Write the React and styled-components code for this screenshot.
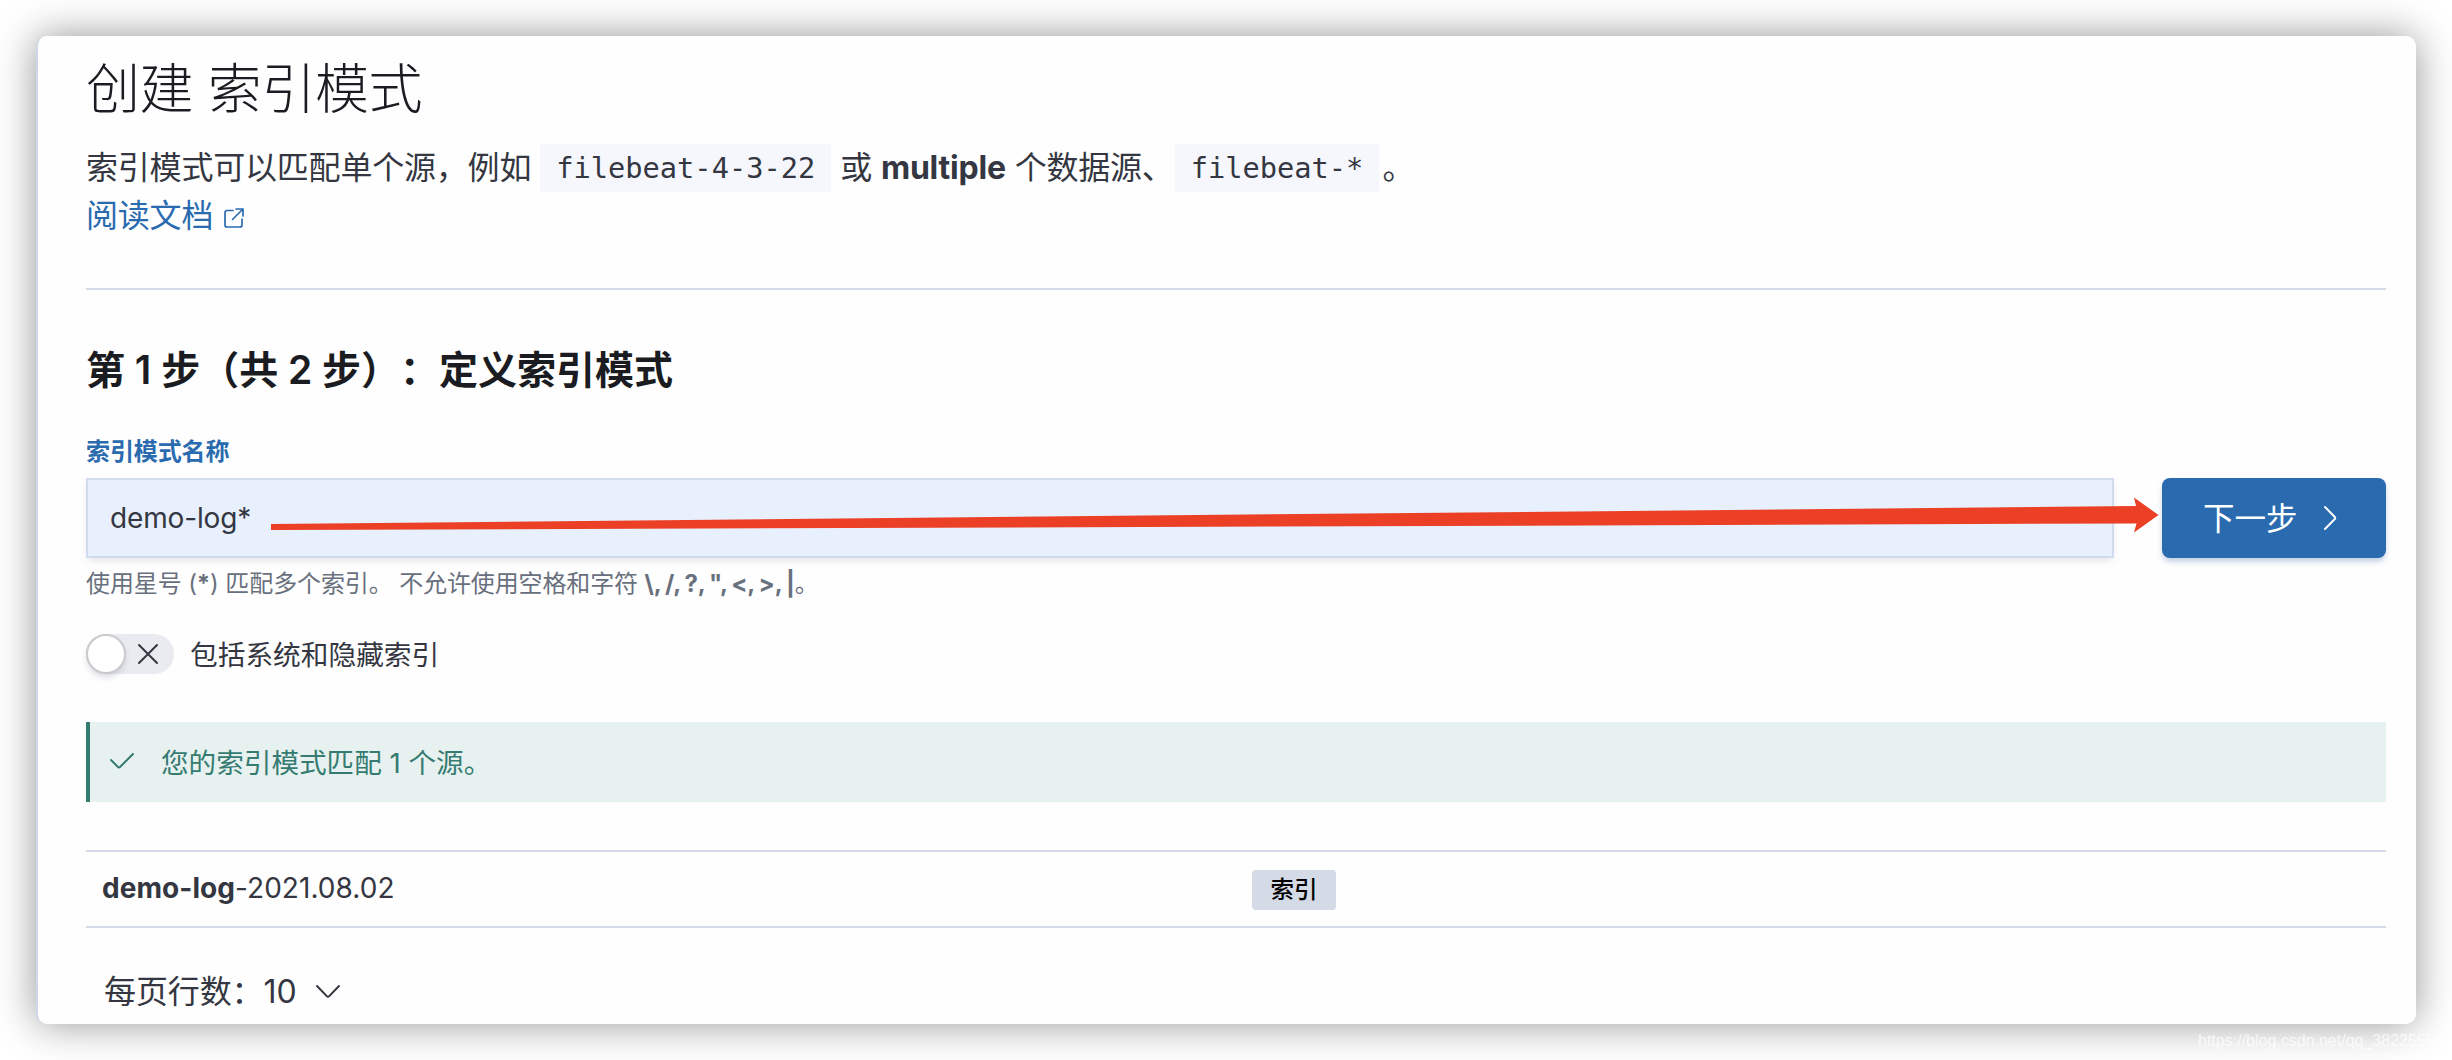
import React from "react";
import styled, { createGlobalStyle, css } from "styled-components";

const sans = `Inter, "Noto Sans CJK SC", sans-serif`;

const GlobalStyle = createGlobalStyle`
  * { box-sizing: border-box; }
  body { margin: 0; background: #fff; font-family: ${sans}; color: #343741; }
`;

const Stage = styled.div`
  position: relative;
  width: 2452px;
  height: 1060px;
  padding: 36px;
  overflow: hidden;
  background: #fff;
`;

const Card = styled.main`
  display: flex;
  flex-direction: column;
  height: 988px;
  padding: 18px 30px 0 48px;
  border-left: 2px solid #d0d8e8;
  border-radius: 10px;
  background: #fefefe;
  box-shadow: 0 0 40px rgba(0, 0, 0, 0.42);
`;

const Title = styled.h1`
  margin: 0;
  height: 72px;
  font-size: 54px;
  line-height: 72px;
  font-weight: 300;
  letter-spacing: -0.45px;
  color: #1a1c21;
  white-space: pre;
`;

const Intro = styled.div`
  display: flex;
  flex-direction: column;
  margin-top: 18px;
  font-size: 32px;
  line-height: 48px;
`;

const IntroLine = styled.div`
  display: flex;
  align-items: center;
  height: 48px;
  letter-spacing: -0.2px;
  white-space: pre;
`;

const Bold = styled.strong`
  font-weight: 700;
`;

const Chars = styled(Bold)`
  word-spacing: -1.5px;
`;

const Code = styled.code`
  padding: 0 16px;
  margin: ${(p) => p.$margin};
  font-family: "DejaVu Sans Mono", monospace;
  font-size: 28.7px;
  line-height: 48px;
  letter-spacing: 0;
  background: #f5f7fc;
`;

const DocLink = styled.a`
  display: flex;
  align-items: center;
  gap: 11px;
  color: #2a6bb0;
`;

const Rule = styled.hr`
  width: 100%;
  height: 2px;
  margin: 48px 0 0;
  border: 0;
  background: #d4dae8;
`;

const StepTitle = styled.h2`
  margin: 50px 0 0;
  height: 60px;
  font-size: 39px;
  line-height: 60px;
  font-weight: 600;
  color: #1a1c21;
  white-space: pre;
`;

const Punct = styled.span`
  display: inline-block;
  width: 39px;
`;

const FieldLabel = styled.label`
  margin-top: 36px;
  height: 32px;
  font-size: 24px;
  line-height: 32px;
  font-weight: 600;
  letter-spacing: -0.1px;
  color: #2a6bb0;
`;

const FormRow = styled.div`
  display: flex;
  justify-content: space-between;
  margin-top: 10px;
`;

const Field = styled.div`
  display: flex;
  align-items: center;
  width: 2028px;
  height: 80px;
  padding: 0 22px;
  border: 2px solid #d1dbf0;
  background: #e8f0fe;
  box-shadow: 0 4px 8px -2px rgba(110, 110, 120, 0.2);
  font-size: 28px;
  letter-spacing: -0.15px;
`;

const NextButton = styled.button`
  display: flex;
  align-items: center;
  width: 224px;
  height: 80px;
  padding: 0 0 5px 41px;
  gap: 26px;
  border: 0;
  border-radius: 8px;
  background: #2a6bb0;
  box-shadow: 0 4px 6px -1px rgba(54, 97, 170, 0.35);
  color: #fff;
  font-family: ${sans};
  font-size: 31.5px;
`;

const Help = styled.p`
  margin: 8px 0 0;
  height: 36px;
  font-size: 24px;
  line-height: 36px;
  letter-spacing: -0.12px;
  color: #69707d;
  white-space: pre;
`;

const SwitchRow = styled.div`
  display: flex;
  align-items: center;
  gap: 16px;
  height: 40px;
  margin-top: 32px;
  font-size: 27.7px;
`;

const SwitchLabel = styled.span`
  padding-bottom: 3px;
`;

const Track = styled.span`
  display: flex;
  align-items: center;
  gap: 12px;
  width: 88px;
  height: 40px;
  border-radius: 20px;
  background: #eaebf0;
`;

const Thumb = styled.span`
  width: 40px;
  height: 40px;
  border: 2px solid #c9cacd;
  border-radius: 50%;
  background: #fff;
  box-shadow: 0 4px 6px -1px rgba(80, 90, 120, 0.22);
`;

const Callout = styled.div`
  display: flex;
  align-items: center;
  gap: 27px;
  height: 80px;
  margin-top: 48px;
  padding: 0 0 3px 20px;
  border-left: 4px solid #357b72;
  background: #e7f1ef;
  color: #357b72;
  font-size: 27.6px;
  white-space: pre;
`;

const TableRow = styled.div`
  display: flex;
  align-items: center;
  height: 78px;
  margin-top: 48px;
  border-top: 2px solid #d4dae8;
  border-bottom: 2px solid #d4dae8;
`;

const NameCell = styled.div`
  width: 1166px;
  padding: 0 16px 2px;
  font-size: 28px;
  letter-spacing: 0.05px;
`;

const Badge = styled.span`
  display: flex;
  align-items: center;
  justify-content: center;
  width: 84px;
  height: 40px;
  margin-top: 2px;
  padding-bottom: 4px;
  border-radius: 4px;
  background: #d4dae6;
  color: #000;
  font-size: 23.5px;
  font-weight: 500;
`;

const Pager = styled.div`
  display: flex;
  align-items: center;
  height: 48px;
  margin-top: 37px;
  padding-left: 18px;
  font-size: 32px;
  letter-spacing: -0.1px;
  white-space: pre;
`;

const Icon = styled.svg`
  flex: none;
  overflow: visible;
  fill: none;
  stroke: currentColor;
  stroke-width: ${(p) => p.$stroke || 2};
  stroke-linecap: round;
  stroke-linejoin: round;
  ${(p) => p.$gap && css`margin-left: ${p.$gap}px;`}
  ${(p) => p.$drop && css`margin-top: ${p.$drop}px;`}
`;

const Arrow = styled.svg`
  position: absolute;
  left: 271px;
  top: 496px;
  fill: #eb4025;
`;

const Watermark = styled.span`
  position: absolute;
  left: 2198px;
  top: 1029px;
  font-family: "Liberation Sans", sans-serif;
  font-size: 16px;
  line-height: 24px;
  color: rgba(255, 255, 255, 0.75);
  white-space: nowrap;
`;

export default function App() {
  return (
    <>
      <GlobalStyle />
      <Stage>
        <Card>
          <Title>创建 索引模式</Title>
          <Intro>
            <IntroLine>
              索引模式可以匹配单个源，例如
              <Code $margin="0 9px 0 9px">filebeat-4-3-22</Code>或 <Bold>multiple</Bold> 个数据源、
              <Code $margin="0 3px 0 1px">filebeat-*</Code>。
            </IntroLine>
            <IntroLine>
              <DocLink>
                阅读文档
                <Icon width="20" height="20" viewBox="0 0 20 20" $stroke={1.7} $drop={3}>
                  <path d="M9 2.500H3a2 2 0 0 0-2 2V17a2 2 0 0 0 2 2h13a2 2 0 0 0 2-2v-6M12 1h7v7M19 1 8.500 11.500" />
                </Icon>
              </DocLink>
            </IntroLine>
          </Intro>
          <Rule />
          <StepTitle>
            第 1 步（共 2 步<Punct>）</Punct>
            <Punct>：</Punct>定义索引模式
          </StepTitle>
          <FieldLabel>索引模式名称</FieldLabel>
          <FormRow>
            <Field>demo-log*</Field>
            <NextButton>
              下一步
              <Icon width="12" height="24" viewBox="0 0 12 24" $drop={5}>
                <path d="M1 1l9.800 10a1.400 1.400 0 0 1 0 2L1 23" />
              </Icon>
            </NextButton>
          </FormRow>
          <Help>
            使用星号 (<Bold>*</Bold>) 匹配多个索引。 不允许使用空格和字符 <Chars>\, /, ?, ", &lt;, &gt;, |</Chars>。
          </Help>
          <SwitchRow>
            <Track>
              <Thumb />
              <Icon width="20" height="20" viewBox="0 0 20 20">
                <path d="M1 1l18 18M19 1L1 19" />
              </Icon>
            </Track>
            <SwitchLabel>包括系统和隐藏索引</SwitchLabel>
          </SwitchRow>
          <Callout>
            <Icon width="24" height="16" viewBox="0 0 24 16">
              <path d="M1 7l7 7a1.400 1.400 0 0 0 2 0L23 1" />
            </Icon>
            您的索引模式匹配 1 个源。
          </Callout>
          <TableRow>
            <NameCell>
              <Bold>demo-log</Bold>-2021.08.02
            </NameCell>
            <Badge>索引</Badge>
          </TableRow>
          <Pager>
            每页行数：10
            <Icon width="24" height="13" viewBox="0 0 24 13" $gap={19} $drop={4}>
              <path d="M1 1l10 10.400a1.400 1.400 0 0 0 2 0L23 1" />
            </Icon>
          </Pager>
        </Card>
        <Arrow width="1888" height="38" viewBox="271 496 1888 38">
          <path d="M271 524L2136 506L2134 497.500L2158.500 515L2134 532.500L2136.500 523.500L271 530Z" />
        </Arrow>
        <Watermark>https://blog.csdn.net/qq_38225558</Watermark>
      </Stage>
    </>
  );
}
